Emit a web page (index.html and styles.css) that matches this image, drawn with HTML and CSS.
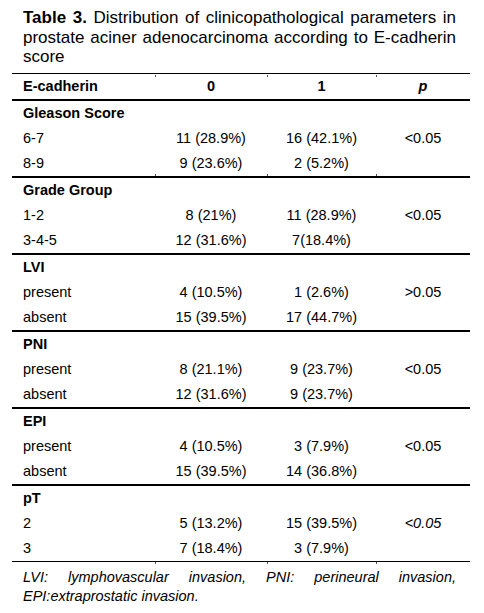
FILE: index.html
```html
<!DOCTYPE html>
<html lang="en">
<head>
  <meta charset="UTF-8">
  <meta name="viewport" content="width=device-width, initial-scale=1.0">
  <title>Table 3</title>
  <link rel="stylesheet" href="styles.css">
</head>
<body>
  <div class="page">
    <p class="caption"><b>Table 3.</b> Distribution of clinicopathological parameters in prostate aciner adenocarcinoma according to E-cadherin score</p>

    <table class="data">
      <colgroup>
        <col class="c-label">
        <col class="c-zero">
        <col class="c-one">
        <col class="c-p">
      </colgroup>
      <thead>
        <tr class="tick-top">
          <th>E-cadherin</th>
          <th>0</th>
          <th>1</th>
          <th><i>p</i></th>
        </tr>
      </thead>
      <tbody>
        <tr class="group"><td colspan="4">Gleason Score</td></tr>
        <tr><td>6-7</td><td>11 (28.9%)</td><td>16 (42.1%)</td><td>&lt;0.05</td></tr>
        <tr class="last tick-bottom"><td>8-9</td><td>9 (23.6%)</td><td>2 (5.2%)</td><td></td></tr>

        <tr class="group"><td colspan="4">Grade Group</td></tr>
        <tr><td>1-2</td><td>8 (21%)</td><td>11 (28.9%)</td><td>&lt;0.05</td></tr>
        <tr class="last"><td>3-4-5</td><td>12 (31.6%)</td><td>7(18.4%)</td><td></td></tr>

        <tr class="group"><td colspan="4">LVI</td></tr>
        <tr><td>present</td><td>4 (10.5%)</td><td>1 (2.6%)</td><td>&gt;0.05</td></tr>
        <tr class="last"><td>absent</td><td>15 (39.5%)</td><td>17 (44.7%)</td><td></td></tr>

        <tr class="group"><td colspan="4">PNI</td></tr>
        <tr><td>present</td><td>8 (21.1%)</td><td>9 (23.7%)</td><td>&lt;0.05</td></tr>
        <tr class="last"><td>absent</td><td>12 (31.6%)</td><td>9 (23.7%)</td><td></td></tr>

        <tr class="group"><td colspan="4">EPI</td></tr>
        <tr><td>present</td><td>4 (10.5%)</td><td>3 (7.9%)</td><td>&lt;0.05</td></tr>
        <tr class="last"><td>absent</td><td>15 (39.5%)</td><td>14 (36.8%)</td><td></td></tr>

        <tr class="group"><td colspan="4">pT</td></tr>
        <tr><td>2</td><td>5 (13.2%)</td><td>15 (39.5%)</td><td><i>&lt;0.05</i></td></tr>
        <tr class="end tick-end"><td>3</td><td>7 (18.4%)</td><td>3 (7.9%)</td><td></td></tr>
      </tbody>
    </table>

    <p class="note">LVI: lymphovascular invasion, PNI: perineural invasion, EPI:extraprostatic invasion.</p>
  </div>
</body>
</html>
```

FILE: styles.css
```css
body {
  margin: 0;
  background: #fff;
  color: #000;
  font-family: "Liberation Sans", Arial, sans-serif;
}
.page {
  width: 458px;
  margin-left: 12px;
  padding-top: 8px;
}
.caption {
  margin: 0 14px 6px 11px;
  font-size: 17px;
  line-height: 19.5px;
  text-align: justify;
}
.data {
  width: 458px;
  border-collapse: collapse;
  table-layout: fixed;
  font-size: 14.5px;
  border-top: 1px solid #000;
}
.c-label { width: 143px; }
.c-zero { width: 112px; }
.c-one { width: 109px; }
.c-p { width: 94px; }

.data th,
.data td {
  height: 25px;
  padding: 0;
  text-align: center;
  vertical-align: middle;
  line-height: 16px;
  position: relative;
}
.data th:first-child,
.data td:first-child {
  text-align: left;
  padding-left: 11px;
}
.data thead th {
  height: 25px;
  font-weight: bold;
  border-bottom: 2px solid #000;
}
.data tr.group td {
  font-weight: bold;
}
.data tr.last td {
  border-bottom: 2px solid #000;
}
.data tr.end td {
  border-bottom: 1px solid #000;
}

/* faint ticks where the column borders meet the rules */
.tick-top th + th::before,
.tick-bottom td + td::before,
.tick-end td + td::before {
  content: "";
  position: absolute;
  left: 0;
  width: 1px;
  height: 2px;
  background: #555;
}
.tick-top th + th::before { top: 1px; }
.tick-bottom td + td::before { bottom: 0; }
.tick-end td + td::before { bottom: -3px; }

.note {
  margin: 6px 14px 0 11px;
  font-size: 14.5px;
  line-height: 19px;
  font-style: italic;
  text-align: justify;
}
```
